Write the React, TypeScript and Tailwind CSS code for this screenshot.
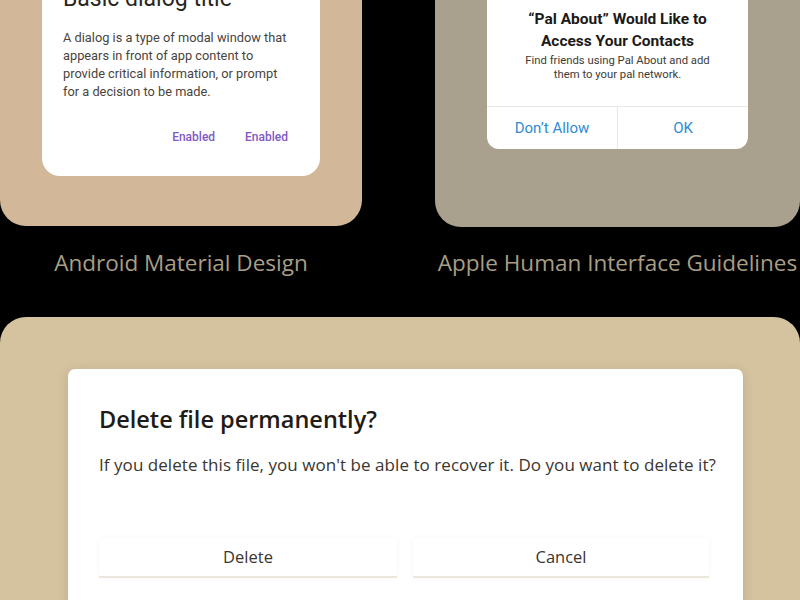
export default function App() {
  return (
    <div className="w-[800px] h-[600px] overflow-hidden bg-black" style={{ fontFamily: '"Open Sans", "Noto Sans", sans-serif' }}>
      {/* Top showcase row */}
      <div className="flex items-start gap-[73px] -mt-[74px]">
        {/* Android */}
        <div className="flex flex-col items-center w-[362px] shrink-0">
          <div className="w-full h-[300px] bg-[#d2b899] rounded-[26px] flex justify-center items-end pb-[50px]">
            <div className="w-[278px] bg-white rounded-[18px] pl-[21px] pr-[32px] pt-[50px] pb-[30px]" style={{ fontFamily: 'Roboto, "Noto Sans", sans-serif' }}>
              <h2 className="text-[23px] leading-[28px] text-[#2a2622]">Basic dialog title</h2>
              <p className="mt-[16px] text-[12.8px] leading-[18px] text-[#4a4440]">
                A dialog is a type of modal window that appears in front of app content to provide critical information, or prompt for a decision to be made.
              </p>
              <div className="mt-[27px] flex justify-end gap-[30px] text-[12px] font-medium text-[#8259c4]">
                <span>Enabled</span>
                <span>Enabled</span>
              </div>
            </div>
          </div>
          <p className="mt-[21px] text-[22.5px] leading-[32px] text-[#a89e86]">Android Material Design</p>
        </div>

        {/* Apple */}
        <div className="flex flex-col items-center w-[365px] shrink-0">
          <div className="w-full h-[301px] bg-[#a9a18d] rounded-[26px] flex justify-start items-end pb-[78px] pl-[52px]">
            <div className="w-[261px] bg-white rounded-[12px] overflow-hidden" style={{ fontFamily: 'Roboto, "Noto Sans", sans-serif' }}>
              <div className="pt-[80px] pb-[24px] text-center">
                <h3 className="px-[28px] text-[15.5px] leading-[22px] font-bold text-[#1c1a18]">“Pal About” Would Like to Access Your Contacts</h3>
                <p className="mt-[2px] px-[24px] text-[11.3px] leading-[14px] text-[#3d3a36]">Find friends using Pal About and add them to your pal network.</p>
              </div>
              <div className="flex border-t border-[#ebe8e2] text-[15px] text-[#2e8bd4]">
                <div className="w-[131px] h-[42px] flex items-center justify-center border-r border-[#ebe8e2]">Don’t Allow</div>
                <div className="flex-1 h-[42px] flex items-center justify-center">OK</div>
              </div>
            </div>
          </div>
          <p className="mt-[20px] text-[22.5px] leading-[32px] text-[#a89e86]">Apple Human Interface Guidelines</p>
        </div>
      </div>

      {/* Windows style */}
      <div className="mt-[38px] h-[320px] bg-[#d5c39f] rounded-[26px] pt-[52px] pl-[68px] pr-[57px]">
        <div className="h-[300px] bg-white rounded-[7px] shadow-[0_2px_12px_rgba(0,0,0,0.12)] pt-[33px] px-[31px]">
          <h2 className="text-[23.5px] leading-[34px] font-semibold text-[#1f1b16]">Delete file permanently?</h2>
          <p className="mt-[18px] whitespace-nowrap text-[17px] leading-[22px] text-[#3b352e] tracking-[0.05px]">
            If you delete this file, you won't be able to recover it. Do you want to delete it?
          </p>
          <div className="mt-[62px] flex gap-[16px] text-[16.5px] text-[#3b352e]">
            <div className="w-[298px] h-[40px] flex items-center justify-center bg-white border-b-2 border-[#ece7dd] shadow-[0_0_6px_rgba(0,0,0,0.04)]">Delete</div>
            <div className="w-[296px] h-[40px] flex items-center justify-center bg-white border-b-2 border-[#ece7dd] shadow-[0_0_6px_rgba(0,0,0,0.04)]">Cancel</div>
          </div>
        </div>
      </div>
    </div>
  );
}
